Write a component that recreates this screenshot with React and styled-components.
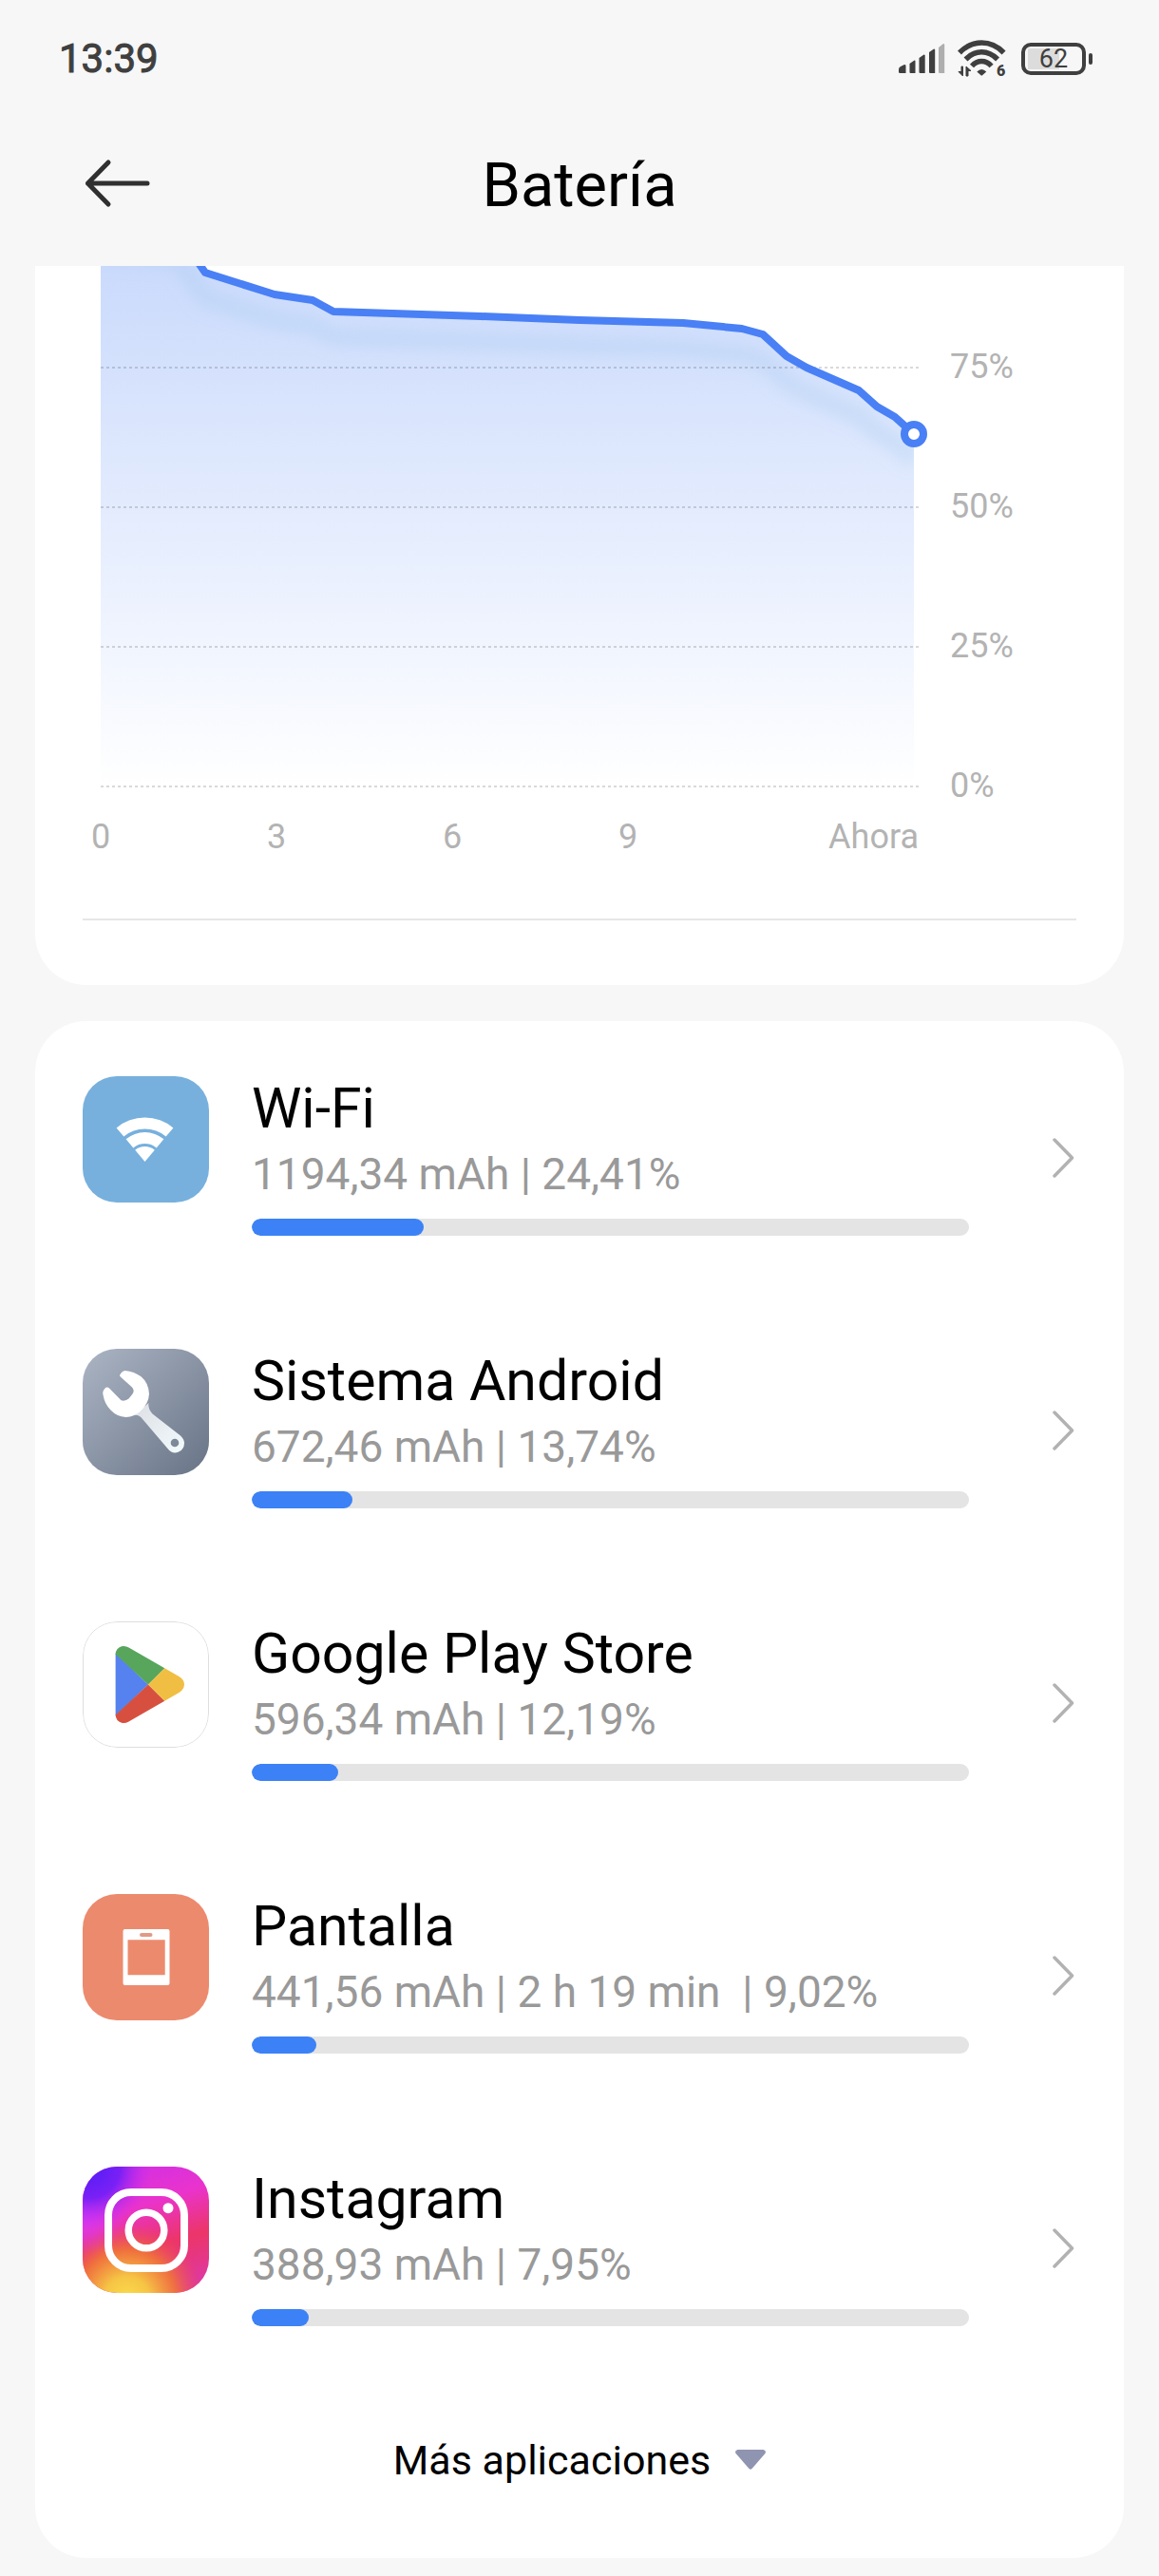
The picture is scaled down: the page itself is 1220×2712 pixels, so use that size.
import React from 'react';
import styled, { createGlobalStyle } from 'styled-components';

const GlobalStyle = createGlobalStyle`
  *,
  *::before,
  *::after {
    box-sizing: border-box;
  }

  body {
    margin: 0;
    background: #f7f7f7;
    color: #000;
    font-family: Roboto, 'Noto Sans', sans-serif;
  }
`;

const Page = styled.div`
  min-height: 100vh;
  padding-bottom: 19px;
  background: #f7f7f7;
`;

const StatusBar = styled.div`
  display: flex;
  align-items: center;
  justify-content: space-between;
  height: 124px;
  padding: 0 70px 0 62px;
  color: #3f3f3f;
`;

const Time = styled.time`
  font-size: 42px;
  line-height: 48px;
  -webkit-text-stroke: 1px #3f3f3f;
`;

const StatusIcons = styled.div`
  display: flex;
  align-items: center;
  gap: 13px;
`;

const BatteryBadge = styled.div`
  display: flex;
  align-items: center;
  gap: 3px;

  &::after {
    content: '';
    width: 4px;
    height: 12px;
    border-radius: 2px;
    background: #3f3f3f;
  }
`;

const BatteryBody = styled.span`
  width: 68px;
  height: 34px;
  border: 4px solid #3f3f3f;
  border-radius: 10px;
  background: linear-gradient(90deg, #dcdcdc 62%, transparent 62%) 3px 2px / 54px 22px no-repeat;
  font-size: 27px;
  line-height: 26px;
  text-align: center;
`;

const Header = styled.header`
  display: grid;
  grid-template-columns: 80px 1fr 80px;
  align-items: center;
  height: 138px;
  margin-bottom: 18px;
  padding: 0 84px;
`;

const BackButton = styled.button`
  display: flex;
  align-items: center;
  width: 80px;
  height: 80px;
  padding: 0;
  border: 0;
  background: none;
`;

const Title = styled.h1`
  margin: 0;
  padding-top: 4px;
  font-size: 65px;
  line-height: 76px;
  font-weight: 400;
  text-align: center;
`;

const Main = styled.main`
  display: flex;
  flex-direction: column;
  gap: 38px;
  padding: 0 37px;
`;

const Card = styled.section`
  overflow: hidden;
  border-radius: ${({ $scrolled }) => ($scrolled ? '0 0 54px 54px' : '54px')};
  background: #fff;
`;

const ChartSvg = styled.svg`
  display: block;
  width: 100%;
  height: auto;
`;

const AxisText = styled.text`
  fill: #b3b3b3;
  font-size: 36px;
`;

const Divider = styled.hr`
  height: 2px;
  margin: 0 50px 68px;
  border: 0;
  background: #e6e6e6;
`;

const AppList = styled.ul`
  margin: 0;
  padding: 0;
  list-style: none;
`;

const AppRow = styled.a`
  display: flex;
  align-items: center;
  height: 287px;
  padding: 0 50px;
  color: inherit;
  text-decoration: none;
`;

const AppIcon = styled.svg`
  flex: none;
  align-self: flex-start;
  width: 133px;
  height: 133px;
  margin-top: 58px;
  border-radius: 36px;
`;

const AppInfo = styled.div`
  flex: 1;
  min-width: 0;
  margin: 0 88px 0 45px;
  padding-bottom: 2px;
`;

const AppName = styled.h2`
  margin: 0 0 9px;
  font-size: 59px;
  line-height: 64px;
  font-weight: 400;
`;

const AppUsage = styled.p`
  margin: 0 0 19px;
  color: #999;
  font-size: 46px;
  line-height: 56px;
  white-space: pre;
`;

const Track = styled.div`
  height: 18px;
  overflow: hidden;
  border-radius: 9px;
  background: #e4e4e4;
`;

const Fill = styled.div`
  height: 100%;
  border-radius: 9px;
  background: #3c82f6;
`;

const MoreButton = styled.button`
  display: flex;
  align-items: center;
  justify-content: center;
  gap: 26px;
  width: 100%;
  height: 183px;
  padding: 0 0 24px;
  border: 0;
  background: none;
  color: #000;
  font: inherit;
  font-size: 43px;
  line-height: 56px;
`;

const SignalIcon = () => (
  <svg width="49" height="32" viewBox="0 0 49 32" fill="#3f3f3f" aria-hidden="true">
    <path d="M0 27q0-2 2-3l4-2q1.500 0 1.500 1v8h-6q-1.500 0-1.500-1z" />
    <path d="M11.500 21l5-3.500q1 0 1 1v12.500h-5q-1 0-1-1z" />
    <path d="M21.500 15l5-3.500q1.200 0 1.200 1v18.500h-5q-1.200 0-1.200-1z" />
    <path d="M32 9l5-3.500q1.200 0 1.200 1v24.500h-5q-1.200 0-1.200-1z" />
    <path d="M42 4l5-4q1.200 0 1.200 1v30h-5q-1.200 0-1.200-1z" fill="#aeaeae" />
  </svg>
);

const WifiStatusIcon = () => (
  <svg width="54" height="52" viewBox="0 -6 54 52" aria-hidden="true">
    <g fill="none" stroke="#3f3f3f" strokeWidth="5.500">
      <path d="M2 13.500Q12 3 25.300 3T48.600 13.500" />
      <path d="M8.500 20.500Q16 12.800 25.300 12.800T42.100 20.500" />
      <path d="M15 27.500Q19.500 22.500 25.300 22.500T35.600 27.500" />
    </g>
    <path d="M20.300 33.500q5-5 10 0l-4 3.500q-1 1-2 0z" fill="#3f3f3f" />
    <path d="M5.500 28v10L1 33.500h3V28zM9 38V28l5 4.500h-3V38z" fill="#3f3f3f" stroke="#3f3f3f" />
    <text x="41" y="38" fontSize="16" fontWeight="900" fill="#3f3f3f">6</text>
  </svg>
);

const ArrowLeft = () => (
  <svg width="80" height="60" viewBox="0 0 80 60" aria-hidden="true">
    <path
      d="M30 8 8.500 30 30 52M8.500 30H71"
      fill="none"
      stroke="#303030"
      strokeWidth="5"
      strokeLinecap="round"
      strokeLinejoin="round"
    />
  </svg>
);

const ChevronRight = () => (
  <svg width="25" height="44" viewBox="0 0 25 44" aria-hidden="true">
    <path
      d="M2 3 20.500 22 2 41"
      fill="none"
      stroke="#b2b2b2"
      strokeWidth="3.500"
      strokeLinecap="round"
      strokeLinejoin="round"
    />
  </svg>
);

const WifiIcon = () => (
  <AppIcon viewBox="0 0 133 133" aria-hidden="true">
    <rect width="133" height="133" fill="#77b0dd" />
    <g fill="#fff">
      <path d="M35.600 54.400A46.500 46.500 0 0 1 95.400 54.400L87.700 63.600A34.500 34.500 0 0 0 43.300 63.600z" />
      <path d="M45.600 66.300A31 31 0 0 1 85.400 66.300L77.700 75.400A19 19 0 0 0 53.300 75.400z" />
      <path d="M55.200 77.700A16 16 0 0 1 75.800 77.700L65.500 90z" />
    </g>
  </AppIcon>
);

const WrenchIcon = () => (
  <AppIcon viewBox="0 0 133 133" aria-hidden="true">
    <defs>
      <linearGradient id="steel" x1="0" y1="0" x2="1" y2="1">
        <stop offset="0" stopColor="#abb5c4" />
        <stop offset="1" stopColor="#687386" />
      </linearGradient>
      <linearGradient id="handle" x1="0" y1="0" x2="1" y2="1">
        <stop offset="0" stopColor="#dcdfe4" />
        <stop offset="1" stopColor="#f3fbfd" />
      </linearGradient>
    </defs>
    <rect width="133" height="133" fill="url(#steel)" />
    <path
      d="M54 70q5-1 9 4L89 104.500q5 6.500 11 4.500 7-2.500 7-9.500 0-4-4-8L73.500 68.500Q68.500 63 69.500 57z"
      fill="url(#handle)"
    />
    <circle cx="97" cy="99" r="4.300" fill="#7d8999" />
    <path
      d="M39.800 29.500 52 40.500q3 3.500.5 7l-4 5q-3.500 3-8 1.800L28 41.500q-2.500-2-4.800.5-2.700 3-1.700 6.500Q23 58 29.500 64.500 36 71.500 45.500 72q9-.5 15-6Q69.500 58 70 47.500 69.500 36 61.500 29.300 54.500 24 44.500 23q-2.300 0-4 2.500-2.200 2-.7 4z"
      fill="#fff"
    />
  </AppIcon>
);

const PlayIcon = () => (
  <AppIcon viewBox="0 0 133 133" aria-hidden="true">
    <rect x="0.500" y="0.500" width="132" height="132" rx="35.500" fill="#fff" stroke="#dedede" />
    <path d="M34.600 33.500 69 66.500 34.600 99.500z" fill="#5582ee" />
    <path d="M34.600 34.500Q35 28 41 26.200q4-.8 7.500 1.300L86.300 49.300 69 66.500z" fill="#58a55c" />
    <path d="M34.600 98.500Q35 105 41 106.800q4 .8 7.500-1.300L86.300 83.700 69 66.500z" fill="#d7503f" />
    <path d="M86.300 49.300 101.500 58q5.500 3.500 5.500 8.500t-5.500 8.500L86.300 83.700 69 66.500z" fill="#f0be42" />
  </AppIcon>
);

const ScreenIcon = () => (
  <AppIcon viewBox="0 0 133 133" aria-hidden="true">
    <rect width="133" height="133" fill="#ec8a6e" />
    <path
      fillRule="evenodd"
      fill="#fff"
      d="M44.500 37H89.500Q91.500 37 91.500 39V94Q91.500 96 89.500 96H44.500Q42.500 96 42.500 94V39Q42.500 37 44.500 37zM47.500 48.300V85.300H86.700V48.300z"
    />
    <rect x="60" y="41" width="13.500" height="4" rx="2" fill="#e09a86" />
  </AppIcon>
);

const InstagramIcon = () => (
  <AppIcon viewBox="0 0 133 133" aria-hidden="true">
    <defs>
      <linearGradient id="igBase" x1="0.200" y1="0" x2="0.500" y2="1">
        <stop offset="0" stopColor="#cf2fe6" />
        <stop offset="0.350" stopColor="#ea33cc" />
        <stop offset="0.680" stopColor="#ec3568" />
        <stop offset="1" stopColor="#e0389c" />
      </linearGradient>
      <radialGradient id="igViolet" cx="0.050" cy="0" r="0.500">
        <stop offset="0" stopColor="#4f1df7" />
        <stop offset="0.500" stopColor="#7a20f5" />
        <stop offset="1" stopColor="#c92df0" stopOpacity="0" />
      </radialGradient>
      <radialGradient id="igOrchid" cx="0" cy="0.350" r="0.350">
        <stop offset="0" stopColor="#d63af5" />
        <stop offset="1" stopColor="#d63af5" stopOpacity="0" />
      </radialGradient>
      <radialGradient id="igYellow" cx="0.350" cy="1.050" r="0.600">
        <stop offset="0" stopColor="#fbdc4c" />
        <stop offset="0.300" stopColor="#f6c444" />
        <stop offset="0.650" stopColor="#f07638" stopOpacity="0.900" />
        <stop offset="1" stopColor="#ec4a50" stopOpacity="0" />
      </radialGradient>
    </defs>
    <rect width="133" height="133" fill="url(#igBase)" />
    <rect width="133" height="133" fill="url(#igYellow)" />
    <rect width="133" height="133" fill="url(#igOrchid)" />
    <rect width="133" height="133" fill="url(#igViolet)" />
    <rect x="27" y="27" width="80" height="80" rx="24" fill="none" stroke="#fff" strokeWidth="8" />
    <circle cx="67" cy="67" r="18.800" fill="none" stroke="#fff" strokeWidth="7.500" />
    <circle cx="90" cy="43.700" r="5.500" fill="#fff" />
  </AppIcon>
);

const LEVELS = [
  [69, -40], [150, -35], [179, 7], [252, 30], [292, 36], [314, 48], [469, 53], [573, 57],
  [682, 60], [744, 66], [766, 72], [791, 95], [812, 107], [867, 131], [886, 148], [905, 159],
  [925, 177],
];

const PERCENTS = ['75%', '50%', '25%', '0%'];
const HOURS = ['0', '3', '6', '9'];

const BatteryChart = () => {
  const line = `M${LEVELS.map((point) => point.join(' ')).join('L')}`;
  const area = `${line}V548H69z`;

  return (
    <ChartSvg viewBox="0 0 1146 687" role="img" aria-label="Nivel de batería">
      <defs>
        <linearGradient id="area" gradientUnits="userSpaceOnUse" x1="0" y1="0" x2="0" y2="548">
          <stop offset="0" stopColor="#4a80f5" stopOpacity="0.290" />
          <stop offset="1" stopColor="#4a80f5" stopOpacity="0" />
        </linearGradient>
        <filter id="soften" x="-10%" y="-30%" width="120%" height="160%">
          <feGaussianBlur stdDeviation="8" />
        </filter>
        <clipPath id="under">
          <path d={area} />
        </clipPath>
      </defs>
      <path d={area} fill="url(#area)" />
      <g clipPath="url(#under)">
        <path
          d={line}
          transform="translate(0 27)"
          fill="none"
          stroke="#a6cbee"
          strokeWidth="18"
          strokeOpacity="0.350"
          filter="url(#soften)"
        />
      </g>
      {PERCENTS.map((label, index) => (
        <React.Fragment key={label}>
          <path
            d={`M69 ${107 + index * 147}H930`}
            stroke="#000"
            strokeOpacity="0.150"
            strokeWidth="2"
            strokeDasharray="3 3"
          />
          <AxisText x="963" y={118 + index * 147}>{label}</AxisText>
        </React.Fragment>
      ))}
      {HOURS.map((label, index) => (
        <AxisText key={label} x={69 + index * 185} y="613" textAnchor="middle">{label}</AxisText>
      ))}
      <AxisText x="930" y="613" textAnchor="end">Ahora</AxisText>
      <path d={line} fill="none" stroke="#4a80f5" strokeWidth="8" strokeLinejoin="round" />
      <circle cx="925" cy="177" r="10" fill="#fff" stroke="#4a80f5" strokeWidth="8" />
    </ChartSvg>
  );
};

const APPS = [
  { name: 'Wi-Fi', usage: '1194,34 mAh | 24,41%', level: 24, Icon: WifiIcon },
  { name: 'Sistema Android', usage: '672,46 mAh | 13,74%', level: 14, Icon: WrenchIcon },
  { name: 'Google Play Store', usage: '596,34 mAh | 12,19%', level: 12, Icon: PlayIcon },
  { name: 'Pantalla', usage: '441,56 mAh | 2 h 19 min  | 9,02%', level: 9, Icon: ScreenIcon },
  { name: 'Instagram', usage: '388,93 mAh | 7,95%', level: 8, Icon: InstagramIcon },
];

const App = () => (
  <Page>
    <GlobalStyle />
    <StatusBar>
      <Time>13:39</Time>
      <StatusIcons>
        <SignalIcon />
        <WifiStatusIcon />
        <BatteryBadge>
          <BatteryBody>62</BatteryBody>
        </BatteryBadge>
      </StatusIcons>
    </StatusBar>
    <Header>
      <BackButton aria-label="Atrás">
        <ArrowLeft />
      </BackButton>
      <Title>Batería</Title>
    </Header>
    <Main>
      <Card $scrolled>
        <BatteryChart />
        <Divider />
      </Card>
      <Card>
        <AppList>
          {APPS.map(({ name, usage, level, Icon }) => (
            <li key={name}>
              <AppRow href="#">
                <Icon />
                <AppInfo>
                  <AppName>{name}</AppName>
                  <AppUsage>{usage}</AppUsage>
                  <Track role="progressbar" aria-label={name} aria-valuenow={level}>
                    <Fill style={{ width: `${level}%` }} />
                  </Track>
                </AppInfo>
                <ChevronRight />
              </AppRow>
            </li>
          ))}
        </AppList>
        <MoreButton>
          Más aplicaciones
          <svg width="32" height="21" viewBox="0 0 32 21" aria-hidden="true">
            <path d="M2.500 0h27q4 1.500 1.500 4.500L17.500 20q-1.500 1.500-3 0L1 4.500Q-1.500 1.500 2.500 0z" fill="#8f94b0" />
          </svg>
        </MoreButton>
      </Card>
    </Main>
  </Page>
);

export default App;
